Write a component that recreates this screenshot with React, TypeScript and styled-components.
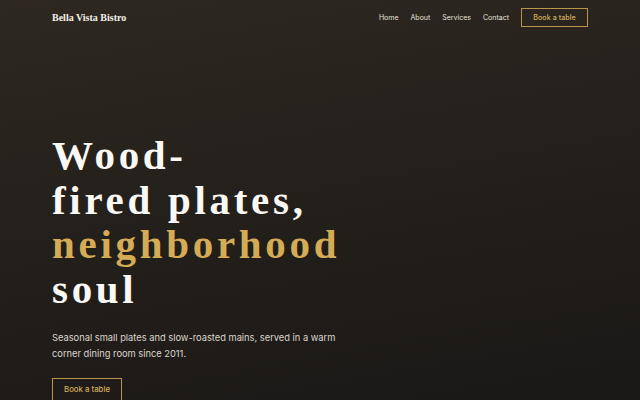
import React from "react";
import styled, { createGlobalStyle } from "styled-components";

const Global = createGlobalStyle`
  html, body { margin: 0; padding: 0; }
  body { background: #1a1817; }
  * { box-sizing: border-box; }
`;

const Page = styled.div`
  width: 640px;
  height: 400px;
  overflow: hidden;
  background: linear-gradient(170deg, #2e2820 0%, #24201b 45%, #1a1817 100%);
  font-family: "Inter", "Liberation Sans", sans-serif;
  color: #f3efe8;
  padding: 0 52px;
`;

const Nav = styled.nav`
  height: 35px;
  display: flex;
  align-items: center;
  justify-content: space-between;
`;

const Brand = styled.div`
  font-family: "Liberation Serif", "DejaVu Serif", serif;
  font-weight: 700;
  font-size: 10px;
  color: #f5f1ea;
`;

const Links = styled.div`
  display: flex;
  align-items: center;
  gap: 12px;
`;

const Link = styled.a`
  font-size: 7px;
  color: #e6e1d8;
  text-decoration: none;
`;

const Button = styled.a<{ $small?: boolean }>`
  display: inline-flex;
  align-items: center;
  justify-content: center;
  border: 1px solid #b8954a;
  color: #d4ad5a;
  text-decoration: none;
  font-weight: 500;
  width: ${(p) => (p.$small ? "67px" : "70px")};
  height: ${(p) => (p.$small ? "19px" : "23px")};
  font-size: ${(p) => (p.$small ? "7.2px" : "7.8px")};
`;

const Hero = styled.section`
  padding-top: 98px;
`;

const Heading = styled.h1`
  margin: 0;
  font-family: "Liberation Serif", "Times New Roman", serif;
  font-weight: 700;
  font-size: 41px;
  line-height: 44.5px;
  letter-spacing: 3.7px;
  color: #faf8f4;
`;

const Line = styled.span`
  display: block;
`;

const Accent = styled(Line)`
  color: #d4ac56;
`;

const Lede = styled.p`
  margin: 19px 0 0;
  width: 300px;
  font-size: 9.3px;
  line-height: 16px;
  color: #dcd6cc;
`;

const Actions = styled.div`
  margin-top: 14px;
`;

export default function App() {
  return (
    <>
      <Global />
      <Page>
        <Nav>
          <Brand>Bella Vista Bistro</Brand>
          <Links>
            <Link href="#">Home</Link>
            <Link href="#">About</Link>
            <Link href="#">Services</Link>
            <Link href="#">Contact</Link>
            <Button href="#" $small>Book a table</Button>
          </Links>
        </Nav>
        <Hero>
          <Heading>
            <Line>Wood-</Line>
            <Line>fired plates,</Line>
            <Accent>neighborhood</Accent>
            <Line>soul</Line>
          </Heading>
          <Lede>
            Seasonal small plates and slow-roasted mains, served in a warm corner dining room since 2011.
          </Lede>
          <Actions>
            <Button href="#">Book a table</Button>
          </Actions>
        </Hero>
      </Page>
    </>
  );
}
